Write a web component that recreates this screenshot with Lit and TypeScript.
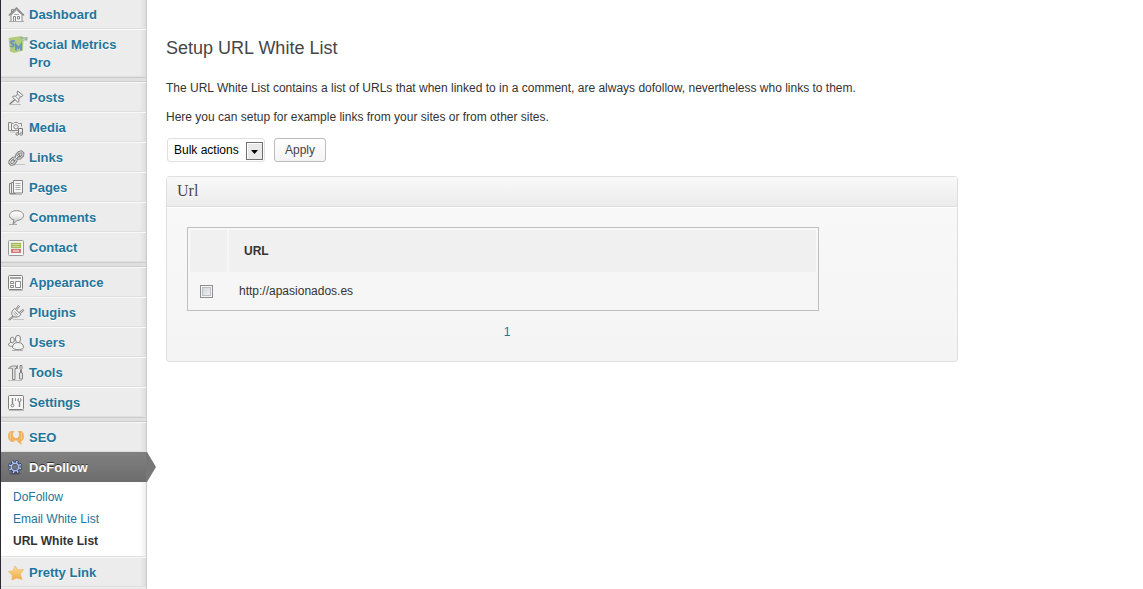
import { LitElement, html, css, svg, nothing } from "lit";
import { customElement, state } from "lit/decorators.js";
import { classMap } from "lit/directives/class-map.js";

const icons: Record<string, unknown> = {
  home: svg`<path d="M3 8v6.500h11V7.500L8.500 3z" fill="#f8f8f8" stroke="#888"/><g fill="none" stroke="#888"><path d="M.800 8.500 8.500 1 16 8.500" stroke-width="1.400"/><path d="M3.500 6V2.500h2V4" /><path d="M5.500 14.500v-5h2v5M9.500 9.500h2v2.500h-2z"/><path d="M1 14.500h15" stroke="#aaa"/><path d="M6 7.500h5" stroke="#aaa"/></g>`,
  metrics: svg`<path d="M.500 1 6 0l8-1 1.500 4-.500 10.500L6 16l-4-1.500z" fill="#b3cc7c"/><path d="M12 0h7.500v3.500H14z" fill="#98b4a0"/><path d="M15 1h3M14 2.500h3" stroke="#c2d3b0"/><path d="M6.800 4.300C3.500 3 1.500 5.500 4 6.500c3.200 1 2 4-1.500 2.300M8 13.500V8l2.500 3 2.500-3.500v6" fill="none" stroke="#6c97bb" stroke-width="2"/>`,
  pin: svg`<path d="M9.800 1 15 5.500l-1 1-1.500.2L10.800 9l.2 2.500-1.200.8L4.500 7.200l.8-1.200 2.500.2L9.600 4l-.6-1.800z" fill="#f0f0f0" stroke="#808080"/><path d="M7 9.500 1.800 14" stroke="#777" stroke-width="1.300"/><path d="M1 14.500h12" stroke="#bbb"/><path d="m9.500 4.200 3 2.600M7.600 6.500l3 2.700" stroke="#999"/>`,
  media: svg`<g fill="none" stroke="#888"><path d="M3.500 2.500h-3v8h3"/><path d="M3.500 3.500h2l1-1h3l1 1h3v3M10.500 10.500h-7v-7" fill="#f4f4f4"/><circle cx="8" cy="6.800" r="2.200"/><path d="M10.500 14V8.500h4V14" stroke="#777"/></g><path d="M2 12h5" stroke="#bbb"/><g fill="#f2f2f2" stroke="#808080"><circle cx="9.200" cy="14" r="1.300"/><circle cx="13.200" cy="14" r="1.300"/></g>`,
  link: svg`<g fill="none" stroke-linecap="round"><path d="m8.500 7.500-.2-2 2.500-3 2.500-.7 1.700 1.500-.3 2.300-2.700 2.500-2 .200M7 8l-2 .200-3 2.800-.3 2 1.600 1.500 2.400-.6L8 11l.200-1.700M6 10l5-5" stroke="#808080" stroke-width="2.800"/><path d="m8.500 7.500-.2-2 2.500-3 2.500-.7 1.700 1.500-.3 2.300-2.700 2.500-2 .200M7 8l-2 .200-3 2.800-.3 2 1.600 1.500 2.400-.6L8 11l.200-1.700M6 10l5-5" stroke="#f0f0f0" stroke-width=".9"/></g><path d="M7 14.500h10" stroke="#c4c4c4"/>`,
  pages: svg`<g fill="#eee" stroke="#858585"><path d="M1.500 3.500h4v10h-4z"/><path d="M3.500 2.500h4v11h-4z"/><path d="M5.500.500h9v12.500h-9z" fill="#f6f6f6"/></g><path d="M7.500 3.500h5M7.500 5.500h5M7.500 7.500h5M7.500 9.500h5" stroke="#aaa"/><path d="M2 14.500h12" stroke="#bbb"/>`,
  comment: svg`<defs><linearGradient id="c" x2="0" y2="1"><stop stop-color="#fff"/><stop offset=".4" stop-color="#eee"/><stop offset="1" stop-color="#bdbdbd"/></linearGradient></defs><path d="M8.500.700c4 0 7 2 7 4.800s-3 4.800-6.300 4.800L5 14.500l.9-4.600C3.200 9.200 1.500 7.700 1.500 5.500c0-2.800 3-4.800 7-4.800z" fill="url(#c)" stroke="#858585"/><path d="M1 14.500h8" stroke="#aaa"/>`,
  contact: svg`<rect x=".5" y=".5" width="15" height="15" rx="1" fill="#f7f7f7" stroke="#999"/><path d="M3.500 3.500h9v4h-9zM3.500 5.500h9" fill="none" stroke="#a5bd55" stroke-width="1.300"/><path d="M3 9h10v4H3z" fill="#d47878"/><path d="M5 10.500h6v1H5z" fill="#fff"/>`,
  appearance: svg`<rect x=".500" y=".500" width="14" height="14" rx="1" fill="#f6f6f6" stroke="#808080"/><path d="M2 3h11" stroke="#a5a5a5" stroke-width="2"/><path d="M2.500 6.500h3v2h-3zM2.500 10.500h3v2h-3zM7.500 6.500h5v6h-5z" fill="#fff" stroke="#888"/><path d="M1 15.500h14" stroke="#bbb"/>`,
  plug: svg`<g fill="none" stroke="#808080"><path d="m6.500 3.500 6.500 6c-2 2.500-5.500 3.500-8 1.500s-1-5.500 1.500-7.500z" fill="#f2f2f2"/><path d="m7.500 4.200 3-3.700 1 1-3 3.700M11 7.600l4-3.200.8 1.100-3.800 3.200M5 11 .8 14.200l.8.9L6 11.700" fill="#f2f2f2"/><path d="M6.500 6.500 10 9.700M5.500 8l3 2.800" stroke="#999"/></g><path d="M5 14.500h11" stroke="#c4c4c4"/>`,
  users: svg`<g fill="#f2f2f2" stroke="#858585"><path d="M3.500 7.200C1.500 7.500.500 8.500.500 10.200c1 1.100 3 1.300 4.500 1"/><ellipse cx="4.300" cy="5" rx="2" ry="2.800"/><path d="M10 7.500c-3.500 0-5.500 2-5.500 5.200 2 2.600 9.200 2.600 11.200 0-.2-3.200-2.200-5.200-5.700-5.200z"/><ellipse cx="10" cy="4" rx="2.600" ry="3.700"/></g><path d="M4 15.500h11" stroke="#b0b0b0"/>`,
  tools: svg`<g fill="#e4e4e4" stroke="#858585"><path d="M.500 3.500c1-2 3-2.500 5-2.500h3v2.500h-1.500v11h-2.500v-11C2.500 3 1.500 3 .500 3.500z"/><path d="M12 .500h2v3l-.5 1v3.500h1v6h-3V8h1V4.500l-.5-1z"/></g><path d="M0 15.500h14" stroke="#c0c0c0"/><path d="M9.500 0v4" stroke="#999"/>`,
  settings: svg`<rect x=".500" y=".500" width="15" height="14" rx="1" fill="#f8f8f8" stroke="#808080"/><path d="M4.500 3v6M11.500 7v5" stroke="#888" stroke-width="1.400"/><circle cx="4.500" cy="10.500" r="1.400" fill="#fff" stroke="#777"/><circle cx="11.500" cy="5" r="1.600" fill="#fff" stroke="#777"/><path d="M7.500 3v3" stroke="#999"/><path d="M11.500 2.500v2" stroke="#f8f8f8"/><path d="M1 15.500h15" stroke="#bbb"/>`,
  seo: svg`<path d="M3 1h3.500L5 3v3l2 2h2.500L11 6V3L9.500 1h4c1.500 1 2.500 3 2.500 5.300 0 2.700-1 4.200-3 5.200l1 3.500-5-3.500 1-1H6l1 1-3.500.5C1 10.500 0 8.700 0 6.300 0 3.500 1 1.800 3 1z" fill="#efb25e"/><path d="M2.500 2.500v7M13.500 2.500v7" stroke="#f5cb8c"/>`,
  gear: svg`<ellipse cx="7" cy="13.500" rx="6" ry="1.500" fill="#5a5a5a"/><circle cx="7" cy="7" r="5.200" fill="none" stroke="#2c3858" stroke-width="3.600" stroke-dasharray="2.400 1.684"/><circle cx="7" cy="7" r="4" fill="none" stroke="#2c3858" stroke-width="3"/><circle cx="7" cy="7" r="5.200" fill="none" stroke="#b4c8f2" stroke-width="2.400" stroke-dasharray="1.400 2.684" stroke-dashoffset="-.5"/><circle cx="7" cy="7" r="3.700" fill="none" stroke="#a9bfed" stroke-width="1.600"/>`,
  star: svg`<defs><linearGradient id="g" x2="0" y2="1"><stop stop-color="#fbe08c"/><stop offset="1" stop-color="#efa84a"/></linearGradient></defs><path d="m7 1 2.800 4 5.700-.500-3.300 4.500 1.800 5.500-5.300-1.500L4 15l.3-5L.500 6.700l4.900-1z" fill="url(#g)" stroke="#efb765" stroke-width=".800" stroke-linejoin="round"/>`,
};

interface Item {
  label: string;
  icon: string;
  current?: boolean;
  children?: string[];
}

const groups: Item[][] = [
  [
    { label: "Dashboard", icon: "home" },
    { label: "Social Metrics Pro", icon: "metrics" },
  ],
  [
    { label: "Posts", icon: "pin" },
    { label: "Media", icon: "media" },
    { label: "Links", icon: "link" },
    { label: "Pages", icon: "pages" },
    { label: "Comments", icon: "comment" },
    { label: "Contact", icon: "contact" },
  ],
  [
    { label: "Appearance", icon: "appearance" },
    { label: "Plugins", icon: "plug" },
    { label: "Users", icon: "users" },
    { label: "Tools", icon: "tools" },
    { label: "Settings", icon: "settings" },
  ],
  [
    { label: "SEO", icon: "seo" },
    { label: "DoFollow", icon: "gear", current: true, children: ["DoFollow", "Email White List", "URL White List"] },
    { label: "Pretty Link", icon: "star" },
  ],
];

@customElement("admin-menu")
class AdminMenu extends LitElement {
  static styles = css`
    :host {
      display: block;
      box-sizing: border-box;
      width: 147px;
      border-left: 1px solid #2b2b35;
      border-right: 1px solid #ccc;
      background: #ececec;
      font: 13px/18px "Liberation Sans", Arial, sans-serif;
    }
    .menu {
      margin-top: -1px;
    }
    .group + .group {
      border-top: 1px solid #ccc;
      box-shadow: inset 0 3px #dfdfdf, inset 0 4px #ccc;
      padding-top: 4px;
    }
    ul {
      margin: 0;
      padding: 0;
      list-style: none;
    }
    .item {
      display: grid;
      grid-template-columns: 20px 1fr;
      gap: 1px;
      padding: 6px 12px 4px 7px;
      border-top: 1px solid #f9f9f9;
      border-bottom: 1px solid #dfdfdf;
      background: linear-gradient(to left, #dcdcdc, #ececec 6px);
      color: #21759b;
      font-weight: bold;
      text-decoration: none;
      text-shadow: 0 1px 0 #fff;
    }
    .icon {
      width: 20px;
      height: 16px;
      margin-top: 1px;
      overflow: visible;
    }
    .current {
      position: relative;
      background: linear-gradient(#808080, #6d6d6d);
      border-top-color: #808080;
      border-bottom-color: #6d6d6d;
      color: #fff;
      text-shadow: 0 -1px 0 #333;
    }
    .tip {
      position: absolute;
      left: 100%;
      top: -1px;
      width: 10px;
      height: 30px;
    }
    .sub {
      padding: 4px 0;
      border-bottom: 1px solid #dfdfdf;
      background: linear-gradient(to left, #ededed, #fff 6px);
      font-size: 12px;
      line-height: 22px;
    }
    .child {
      display: block;
      padding-left: 12px;
      color: #21759b;
      text-decoration: none;
    }
    .chosen {
      color: #333;
      font-weight: bold;
    }
  `;

  private renderItem(item: Item) {
    return html`<li>
      <a class=${classMap({ item: true, current: !!item.current })} href="#">
        <svg class="icon" viewBox="0 0 20 16" aria-hidden="true">${icons[item.icon]}</svg>
        <span>${item.label}</span>
        ${item.current
          ? html`<svg class="tip" viewBox="0 0 10 30" aria-hidden="true"><path d="M0 0h1l9 15-9 15H0z" fill="#777" /></svg>`
          : nothing}
      </a>
      ${item.children
        ? html`<ul class="sub">
            ${item.children.map(
              (label, i) => html`<li><a class=${classMap({ child: true, chosen: i === 2 })} href="#">${label}</a></li>`
            )}
          </ul>`
        : nothing}
    </li>`;
  }

  render() {
    return html`<nav class="menu">
      ${groups.map((group) => html`<ul class="group">${group.map((item) => this.renderItem(item))}</ul>`)}
    </nav>`;
  }
}

@customElement("url-list")
class UrlList extends LitElement {
  @state() private urls = ["http://apasionados.es"];

  static styles = css`
    :host {
      display: block;
    }
    .panel {
      max-width: 790px;
      border: 1px solid #dfdfdf;
      border-radius: 3px;
      background: linear-gradient(#f9f9f9, #f4f4f4);
    }
    .title {
      margin: 0;
      padding: 4px 10px 5px;
      border-bottom: 1px solid #dfdfdf;
      background: linear-gradient(#f9f9f9, #ececec);
      box-shadow: 0 1px 0 #fff;
      color: #464646;
      font: 16px/20px "Liberation Serif", Georgia, serif;
      text-shadow: 0 1px 0 #fff;
    }
    .body {
      padding: 20px;
    }
    .urls {
      width: 100%;
      max-width: 632px;
      border: 1px solid #c0c0c0;
      border-collapse: separate;
      border-spacing: 2px;
    }
    .head {
      height: 42px;
      padding: 0 15px;
      box-sizing: border-box;
      background: #f0f0f0;
      text-align: left;
    }
    .cell {
      height: 34px;
      padding: 0 10px;
      box-sizing: border-box;
    }
    .pick {
      width: 37px;
      padding: 0 10px;
    }
    .box {
      appearance: none;
      display: block;
      box-sizing: border-box;
      width: 13px;
      height: 13px;
      margin: 0;
      border: 1px solid #8e8f8f;
      background: linear-gradient(135deg, #cbcfd5, #f6f6f6);
      box-shadow: inset 0 0 0 1px #f4f4f4, inset 0 0 0 2px #bbbfc6;
    }
    .box:checked {
      background: #21759b;
    }
    .pager {
      display: flex;
      justify-content: center;
      max-width: 640px;
      padding-top: 13px;
    }
    .page {
      color: #21759b;
      text-decoration: none;
    }
  `;

  render() {
    return html`<section class="panel">
      <h3 class="title">Url</h3>
      <div class="body">
        <table class="urls">
          <thead>
            <tr>
              <th class="head pick"></th>
              <th class="head">URL</th>
            </tr>
          </thead>
          <tbody>
            ${this.urls.map(
              (url) => html`<tr>
                <td class="cell pick"><input class="box" type="checkbox" aria-label=${url} /></td>
                <td class="cell">${url}</td>
              </tr>`
            )}
          </tbody>
        </table>
        <nav class="pager"><a class="page" href="#">1</a></nav>
      </div>
    </section>`;
  }
}

@customElement("app-root")
class AppRoot extends LitElement {
  static styles = css`
    :host {
      display: flex;
      height: 100vh;
      overflow: hidden;
      background: #fff;
      color: #333;
      font: 12px/17px "Liberation Sans", Arial, sans-serif;
    }
    .nav {
      flex: none;
      height: max-content;
      min-height: 100%;
    }
    .main {
      flex: 1;
      min-width: 0;
      padding: 36px 19px 0;
    }
    .heading {
      margin: 0 0 20px;
      color: #464646;
      font-size: 18px;
      font-weight: normal;
      line-height: 24px;
    }
    .text {
      margin: 0 0 12px;
    }
    .actions {
      display: flex;
      align-items: center;
      gap: 9px;
      margin: 12px 0 14px;
      padding-left: 1px;
    }
    .choice {
      display: grid;
      position: relative;
    }
    .select {
      appearance: none;
      box-sizing: border-box;
      width: 98px;
      height: 24px;
      padding: 0 20px 0 6px;
      border: 1px solid #dfdfdf;
      border-radius: 3px;
      background: #fff;
      color: #000;
      font: inherit;
    }
    .arrow {
      position: absolute;
      right: 2px;
      top: 4px;
      width: 17px;
      height: 18px;
      pointer-events: none;
    }
    .apply {
      box-sizing: border-box;
      height: 24px;
      padding: 0 10px;
      border: 1px solid #bbb;
      border-radius: 3px;
      background: linear-gradient(#fefefe, #f4f4f4);
      color: #464646;
      font: inherit;
    }
  `;

  render() {
    return html`
      <admin-menu class="nav"></admin-menu>
      <main class="main">
        <h2 class="heading">Setup URL White List</h2>
        <p class="text">
          The URL White List contains a list of URLs that when linked to in a comment, are always dofollow, nevertheless
          who links to them.
        </p>
        <p class="text">Here you can setup for example links from your sites or from other sites.</p>
        <div class="actions">
          <div class="choice">
            <select class="select" aria-label="Bulk actions">
              <option>Bulk actions</option>
            </select>
            <svg class="arrow" viewBox="0 0 17 18" aria-hidden="true">
              <rect x=".5" y=".5" width="16" height="17" fill="#e9e9e9" stroke="#707070" />
              <path d="M1.500 16.500v-15h14" fill="none" stroke="#fff" />
              <path d="M5 8h7l-3.500 4z" fill="#000" />
            </svg>
          </div>
          <button class="apply" type="button">Apply</button>
        </div>
        <url-list></url-list>
      </main>
    `;
  }
}
